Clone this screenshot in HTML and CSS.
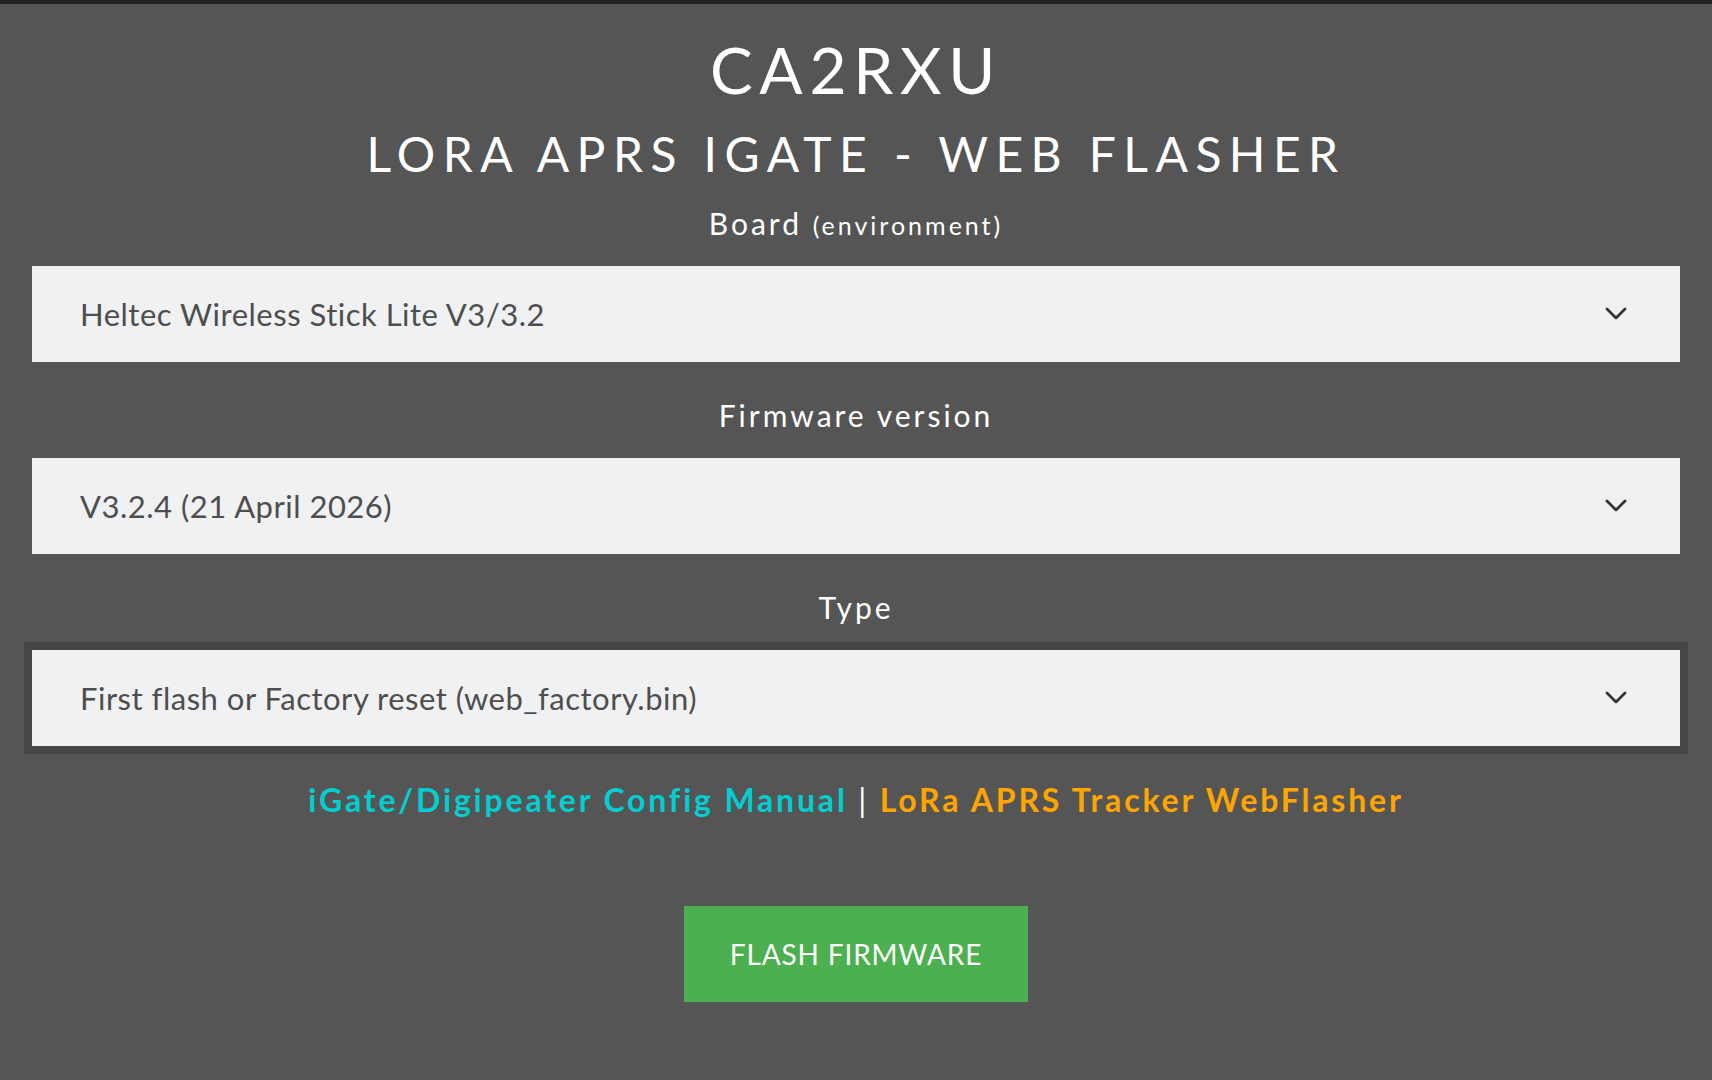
FILE: index.html
```html
<!DOCTYPE html>
<html>

<head>
    <meta http-equiv="Content-Type" content="text/html;charset=utf-8">
    <title>CA2RXU - LoRa APRS iGate Web Flasher</title>
    <link rel="stylesheet" href="styles.css">
</head>

<body>
    <div id="flasher">
        <h1 class="title">CA2RXU</h1>
        <h2 class="subtitle">LORA APRS IGATE - WEB FLASHER</h2>

        <label class="field-label" for="board">Board <small>(environment)</small></label>
        <div class="select-wrap">
            <select id="board" class="picker">
                <option>Heltec Wireless Stick Lite V3/3.2</option>
            </select>
            <svg class="chevron" width="22" height="14" viewBox="0 0 22 14">
                <path d="M2 2 L11 11 L20 2" fill="none" stroke="#333" stroke-width="2.8" stroke-linecap="round" stroke-linejoin="round"/>
            </svg>
        </div>

        <label class="field-label" for="version">Firmware version</label>
        <div class="select-wrap">
            <select id="version" class="picker">
                <option>V3.2.4 (21 April 2026)</option>
            </select>
            <svg class="chevron" width="22" height="14" viewBox="0 0 22 14">
                <path d="M2 2 L11 11 L20 2" fill="none" stroke="#333" stroke-width="2.8" stroke-linecap="round" stroke-linejoin="round"/>
            </svg>
        </div>

        <label class="field-label" for="type">Type</label>
        <div class="select-wrap">
            <select id="type" class="picker focused">
                <option>First flash or Factory reset (web_factory.bin)</option>
            </select>
            <svg class="chevron" width="22" height="14" viewBox="0 0 22 14">
                <path d="M2 2 L11 11 L20 2" fill="none" stroke="#333" stroke-width="2.8" stroke-linecap="round" stroke-linejoin="round"/>
            </svg>
        </div>

        <p class="links">
            <a class="link-manual" href="#">iGate/Digipeater Config Manual</a>
            <span class="sep">|</span>
            <a class="link-tracker" href="#">LoRa APRS Tracker WebFlasher</a>
        </p>

        <div class="actions">
            <button class="flash-btn">FLASH FIRMWARE</button>
        </div>
    </div>
</body>

</html>
```

FILE: styles.css
```css
body {
    margin: 0;
    min-height: 100vh;
    background-color: #555555;
    border-top: 4px solid #222222;
    font-family: Lato, "Open Sans", sans-serif;
    color: #ffffff;
    box-sizing: border-box;
}

#flasher {
    display: flex;
    flex-direction: column;
    align-items: center;
    padding: 0 32px;
}

.title {
    margin: 34px 0 0;
    font-size: 64px;
    font-weight: 400;
    line-height: 1;
    letter-spacing: 0.105em;
}

.subtitle {
    margin: 28px 0 0;
    font-size: 48px;
    font-weight: 400;
    line-height: 1;
    letter-spacing: 0.155em;
}

.field-label {
    margin-top: 38px;
    font-size: 30px;
    line-height: 1;
    letter-spacing: 0.1em;
}

.field-label:first-of-type {
    margin-top: 30px;
}

.field-label small {
    font-size: 25px;
}

.select-wrap {
    position: relative;
    width: 100%;
    margin-top: 28px;
}

.picker {
    display: block;
    width: 100%;
    height: 96px;
    padding: 0 48px;
    border: none;
    border-radius: 0;
    background-color: #f0f1f3;
    color: #4e4e4e;
    font-family: Lato, "Open Sans", sans-serif;
    font-size: 31px;
    letter-spacing: 0.5px;
    appearance: none;
    -webkit-appearance: none;
}

.picker.focused {
    outline: 8px solid #464646;
}

.chevron {
    position: absolute;
    right: 53px;
    top: 41px;
    pointer-events: none;
}

.links {
    margin: 38px 0 0;
    font-size: 32px;
    font-weight: 700;
    line-height: 1;
    letter-spacing: 0.088em;
}

.links a {
    text-decoration: none;
}

.link-manual {
    color: #00ced1;
}

.link-tracker {
    color: #ffa500;
}

.sep {
    color: #ffffff;
    font-weight: 400;
}

.actions {
    margin-top: 90px;
}

.flash-btn {
    width: 344px;
    height: 96px;
    border: none;
    background-color: #4caf50;
    color: #ffffff;
    font-family: Lato, "Open Sans", sans-serif;
    font-size: 28px;
    letter-spacing: 0.03em;
}
```
